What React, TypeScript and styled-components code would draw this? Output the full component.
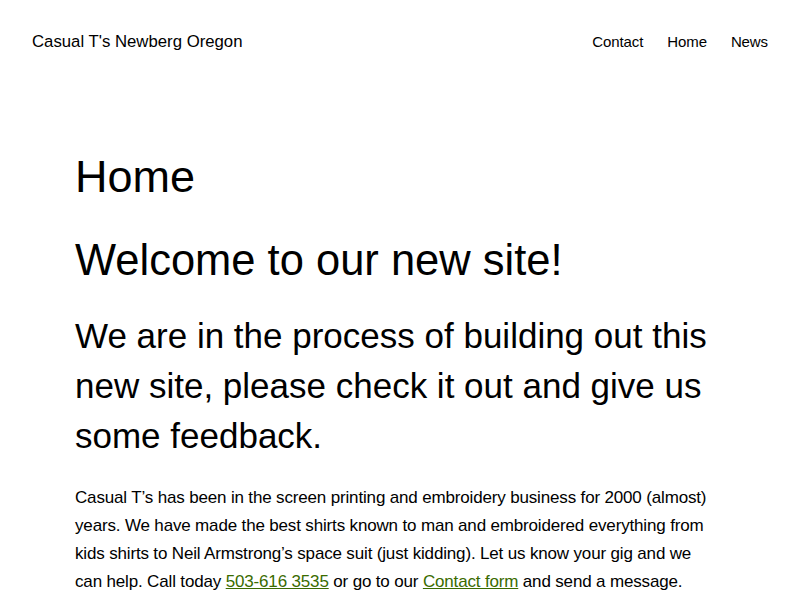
import React from 'react';
import styled, { createGlobalStyle } from 'styled-components';

const GlobalStyle = createGlobalStyle`
  html, body {
    margin: 0;
    padding: 0;
    background: #ffffff;
    color: #000000;
    font-family: "Liberation Sans", Arial, sans-serif;
  }
`;

const Page = styled.div`
  width: 800px;
  min-height: 600px;
  overflow: hidden;
`;

const Header = styled.header`
  display: flex;
  align-items: center;
  justify-content: space-between;
  padding: 30px 32px 0 32px;
  height: 24px;
`;

const SiteTitle = styled.a`
  font-size: 16.75px;
  color: #000;
  text-decoration: none;
`;

const Nav = styled.nav`
  display: flex;
  gap: 24px;
  margin-top: -1px;
`;

const NavLink = styled.a`
  font-size: 15px;
  letter-spacing: -0.1px;
  color: #000;
  text-decoration: none;
`;

const Main = styled.main`
  padding: 96px 75px 0 75px;
  max-width: 640px;
`;

const PageTitle = styled.h1`
  font-size: 45px;
  font-weight: 400;
  line-height: 54px;
  margin: 0 0 30px 0;
`;

const Lead = styled.h2`
  font-size: 43.5px;
  font-weight: 400;
  line-height: 52px;
  margin: 0 0 25px 0;
`;

const Intro = styled.h3`
  font-size: 35px;
  font-weight: 400;
  line-height: 50px;
  margin: 0 0 23px 0;
`;

const Body = styled.p`
  font-size: 17px;
  letter-spacing: -0.16px;
  line-height: 28px;
  margin: 0;
`;

const Link = styled.a`
  color: #3a6b00;
  text-decoration: underline;
`;

export default function App() {
  return (
    <Page>
      <GlobalStyle />
      <Header>
        <SiteTitle href="#">Casual T's Newberg Oregon</SiteTitle>
        <Nav>
          <NavLink href="#">Contact</NavLink>
          <NavLink href="#">Home</NavLink>
          <NavLink href="#">News</NavLink>
        </Nav>
      </Header>
      <Main>
        <PageTitle>Home</PageTitle>
        <Lead>Welcome to our new site!</Lead>
        <Intro>
          We are in the process of building out this new site, please check it out and give us some feedback.
        </Intro>
        <Body>
          Casual T’s has been in the screen printing and embroidery business for 2000 (almost) years. We have made the
          best shirts known to man and embroidered everything from kids shirts to Neil Armstrong’s space suit (just
          kidding). Let us know your gig and we can help. Call today <Link href="#">503-616 3535</Link> or go to our{' '}
          <Link href="#">Contact form</Link> and send a message.
        </Body>
      </Main>
    </Page>
  );
}
